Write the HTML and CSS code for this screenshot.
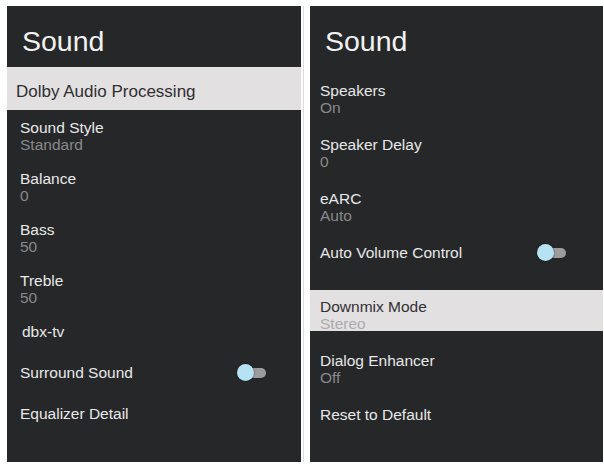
FILE: index.html
```html
<!DOCTYPE html>
<html lang="en">
<head>
<meta charset="utf-8">
<title>Sound Settings</title>
<link rel="stylesheet" href="styles.css">
</head>
<body>
<main class="screens">
  <section class="panel">
    <header class="panel-header"><h1 class="title">Sound</h1></header>
    <div class="focus-row focus-row--left"><span class="focus-label">Dolby Audio Processing</span></div>
    <ul class="list list--left">
      <li class="item item--pair"><span class="label">Sound Style</span><span class="value">Standard</span></li>
      <li class="item item--pair"><span class="label">Balance</span><span class="value">0</span></li>
      <li class="item item--pair"><span class="label">Bass</span><span class="value">50</span></li>
      <li class="item item--pair"><span class="label">Treble</span><span class="value">50</span></li>
      <li class="item item--indent"><span class="label">dbx-tv</span></li>
      <li class="item item--switch"><span class="label">Surround Sound</span><span class="toggle"><span class="toggle-track"></span><span class="toggle-thumb"></span></span></li>
      <li class="item"><span class="label">Equalizer Detail</span></li>
    </ul>
  </section>
  <div class="divider"></div>
  <section class="panel panel--right">
    <header class="panel-header"><h1 class="title">Sound</h1></header>
    <ul class="list list--right">
      <li class="item"><span class="label">Speakers</span><span class="value">On</span></li>
      <li class="item"><span class="label">Speaker Delay</span><span class="value">0</span></li>
      <li class="item"><span class="label">eARC</span><span class="value">Auto</span></li>
      <li class="item item--switch"><span class="label">Auto Volume Control</span><span class="toggle"><span class="toggle-track"></span><span class="toggle-thumb"></span></span></li>
      <li class="item item--focused"><span class="label">Downmix Mode</span><span class="value">Stereo</span></li>
      <li class="item"><span class="label">Dialog Enhancer</span><span class="value">Off</span></li>
      <li class="item"><span class="label">Reset to Default</span></li>
    </ul>
  </section>
</main>
</body>
</html>
```
FILE: styles.css
```css
* { box-sizing: border-box; }

html, body {
  margin: 0;
  padding: 0;
  background: #ffffff;
  overflow: hidden;
}

body {
  font-family: "Liberation Sans", Arial, sans-serif;
}

.screens {
  display: flex;
  padding: 6px 0 0 7px;
  height: 462px;
}

.panel {
  width: 294px;
  height: 456px;
  background: #262729;
  display: flex;
  flex-direction: column;
  flex-shrink: 0;
}

.panel--right {
  width: 293px;
}

.divider {
  width: 1px;
  height: 456px;
  margin: 0 6px 0 2px;
  background: #dcdcdc;
  flex-shrink: 0;
}

.panel-header {
  height: 61px;
  padding: 18.5px 0 0 15px;
}

.title {
  margin: 0;
  font-size: 28.5px;
  line-height: 32px;
  font-weight: 400;
  color: #f1f1f1;
}

.focus-row {
  height: 43px;
  padding: 15px 0 0 9px;
  background: #e3e0e1;
}

.focus-label {
  display: block;
  font-size: 17px;
  line-height: 20px;
  color: #2f2f30;
}

.list {
  list-style: none;
  margin: 0;
  padding: 0;
  display: flex;
  flex-direction: column;
}

.list--left {
  padding: 1px 0 0 13px;
}

.list--right {
  padding-top: 7px;
  gap: 13px;
}

.list--right .item {
  padding-left: 10px;
}

.item {
  height: 41px;
  padding-top: 8px;
  display: flex;
  flex-direction: column;
}

.item--pair {
  margin-bottom: 10px;
}

.item--indent {
  padding-left: 2px;
}

.label {
  font-size: 15.5px;
  line-height: 18px;
  color: #e8e8e8;
}

.value {
  font-size: 15.5px;
  line-height: 15px;
  color: #88898b;
}

.item--focused {
  background: #e3e0e1;
}

.item--focused .label {
  color: #313132;
}

.item--focused .value {
  color: #aeabac;
}

.item--switch {
  flex-direction: row;
  align-items: flex-start;
  justify-content: space-between;
  padding-right: 35px;
}

.list--right .item--switch {
  padding-right: 37px;
}

.toggle {
  position: relative;
  width: 29px;
  height: 17px;
  flex-shrink: 0;
}

.toggle-track {
  position: absolute;
  left: 4px;
  right: 0;
  top: 3.5px;
  height: 10px;
  border-radius: 5px;
  background: #9c9c9d;
}

.toggle-thumb {
  position: absolute;
  left: 0;
  top: 0;
  width: 17px;
  height: 17px;
  border-radius: 50%;
  background: #b6e3f4;
  box-shadow: 0 0 2px rgba(0, 0, 0, 0.6);
}
```
